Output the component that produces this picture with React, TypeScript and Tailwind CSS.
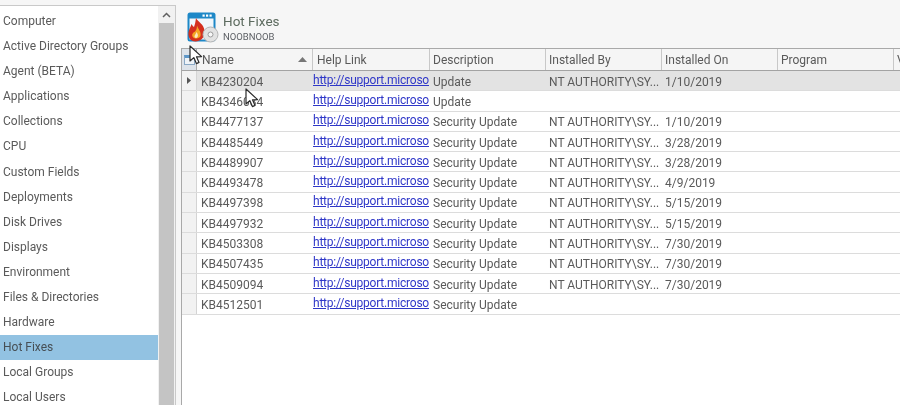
const sideItems = ["Computer","Active Directory Groups","Agent (BETA)","Applications","Collections","CPU","Custom Fields","Deployments","Disk Drives","Displays","Environment","Files & Directories","Hardware","Hot Fixes","Local Groups","Local Users"];
const by = "NT AUTHORITY\\SY...";
const rows = [
  ["KB4230204","Update",by,"1/10/2019"],
  ["KB4346084","Update","",""],
  ["KB4477137","Security Update",by,"1/10/2019"],
  ["KB4485449","Security Update",by,"3/28/2019"],
  ["KB4489907","Security Update",by,"3/28/2019"],
  ["KB4493478","Security Update",by,"4/9/2019"],
  ["KB4497398","Security Update",by,"5/15/2019"],
  ["KB4497932","Security Update",by,"5/15/2019"],
  ["KB4503308","Security Update",by,"7/30/2019"],
  ["KB4507435","Security Update",by,"7/30/2019"],
  ["KB4509094","Security Update",by,"7/30/2019"],
  ["KB4512501","Security Update","",""],
];
const heads = [["Help Link","w-[117px] pl-[4px]"],["Description","w-[116px] pl-[3px]"],["Installed By","w-[116px] pl-[3px]"],["Installed On","w-[116px] pl-[3px]"],["Program","w-[116px] pl-[3px]"]];

function Cursor({ className }: { className: string }) {
  return (
    <svg className={className} width="15" height="21" viewBox="0 0 15 21">
      <path d="M1 1 L1 16 L4.8 12.6 L7.4 18.6 L10 17.4 L7.5 11.8 L12.6 11.6 Z" fill="#fff" stroke="#2a2a2a" strokeWidth="1.2" strokeLinejoin="round" />
    </svg>
  );
}

function HotFixIcon() {
  return (
    <svg width="32" height="31" viewBox="0 0 32 31" className="shrink-0">
      <rect x="0.5" y="0.5" width="28" height="29" rx="2.5" fill="#1e88c7" />
      <rect x="2.5" y="6.5" width="24" height="21" fill="#f1f7fb" />
      <rect x="15.5" y="2.5" width="2.2" height="2.2" fill="#fff" />
      <rect x="19" y="2.5" width="2.2" height="2.2" fill="#fff" />
      <rect x="22.5" y="2.5" width="2.2" height="2.2" fill="#fff" />
      <path d="M9 6 C11 10 17 12 17.5 19 C18 26 13 29.5 8.5 29.5 C3.5 29.5 1 25.5 1.5 20.5 C2 17 3.5 15.5 4.5 12 C5.5 13.5 6 14.5 7 15 C8 12.5 8.5 9.5 9 6 Z" fill="#d42f1e" />
      <path d="M10 13.5 C11 17 14.5 19.5 13.5 24 C12.5 27 7 27.5 5.5 24.5 C4.5 22 6.5 20.5 8 19.5 C9.5 18 10 16 10 13.5 Z" fill="#f5a623" />
      <path d="M9.5 20 C10.5 22 11.5 23 10.5 25 C9.5 26.5 7.5 26 7.5 24.5 C7.5 23 9 22 9.5 20 Z" fill="#fde9c0" />
      <circle cx="23.5" cy="22.5" r="7.5" fill="#e2e2e2" stroke="#b5b5b5" />
      <circle cx="23.5" cy="22.5" r="2.5" fill="#f7f7f7" stroke="#9c9c9c" />
    </svg>
  );
}

export default function App() {
  return (
    <div className="relative flex h-[405px] w-[900px] overflow-hidden bg-[#f6f6f6] text-[12px] text-[#5a5a5a] blur-[0.35px]" style={{ fontFamily: 'Roboto, "Open Sans", sans-serif' }}>
      <div className="mt-[5px] flex w-[176px] shrink-0 border-t border-r border-[#c9c9c9] bg-white">
        <div className="w-[158px] shrink-0 pt-[2.4px]">
          {sideItems.map((s) => (
            <div key={s} className={`flex h-[25.1px] items-center pl-[3px] ${s === "Hot Fixes" ? "bg-[#92c2e2] text-[#474f55]" : ""}`}>{s}</div>
          ))}
        </div>
        <div className="flex w-[17px] flex-col bg-[#f1f1f1]">
          <div className="flex h-[17px] items-center justify-center">
            <svg width="9" height="6" viewBox="0 0 9 6"><path d="M1 5 L4.5 1.5 L8 5" fill="none" stroke="#606060" strokeWidth="1.5" /></svg>
          </div>
          <div className="mx-[1px] flex-1 bg-[#c4c4c4]" />
        </div>
      </div>
      <div className="ml-[5px] flex min-w-0 flex-1 flex-col">
        <div className="flex h-[48px] shrink-0 items-start pl-[6px] pt-[12px]">
          <HotFixIcon />
          <div className="ml-[4px] flex flex-col">
            <div className="text-[13.5px] leading-[18px] text-[#5d6b5f]">Hot Fixes</div>
            <div className="mt-[1px] text-[9.5px] leading-[11px] text-[#5c5f64]">NOOBNOOB</div>
          </div>
        </div>
        <div className="flex-1 overflow-hidden border-t border-l border-[#a9a9a9] bg-white">
          <div className="flex h-[22px] border-b border-[#a3a3a3] bg-[#f5f5f5]">
            <div className="flex w-[15px] shrink-0 items-center justify-center border-r border-[#a9a9a9] bg-[#dde3ea]">
              <div className="h-[10px] w-[11px] border border-[#8aa9c6] border-t-[3px] border-t-[#5c97c9] bg-[#eef3f8]" />
            </div>
            <div className="flex w-[116px] shrink-0 items-center justify-between border-r border-[#c8c8c8] pl-[5px] pr-[5px]">
              <span>Name</span>
              <svg width="9" height="5" viewBox="0 0 9 5"><path d="M0 5 L4.5 0 L9 5 Z" fill="#777" /></svg>
            </div>
            {heads.map(([h, w]) => (
              <div key={h} className={`flex ${w} shrink-0 items-center border-r border-[#c8c8c8]`}>{h}</div>
            ))}
            <div className="flex shrink-0 items-center pl-[3px]">V</div>
          </div>
          {rows.map((r, i) => (
            <div key={r[0]} className={`flex h-[20.3px] border-b border-[#dcdcdc] ${i === 0 ? "bg-[#e3e3e3]" : "bg-white"}`}>
              <div className="flex w-[15px] shrink-0 items-center justify-center border-r border-[#d4d4d4] bg-[#f2f2f2]">
                {i === 0 && <svg width="4" height="7" viewBox="0 0 4 7"><path d="M0 0 L4 3.5 L0 7 Z" fill="#555" /></svg>}
              </div>
              <div className="flex w-[115px] shrink-0 items-center pl-[4px] pt-[2px]">{r[0]}</div>
              <div className="flex w-[117px] shrink-0 items-center overflow-hidden pb-[2px] pl-[1px] tracking-[-0.22px] whitespace-nowrap text-[#2f37c8] underline">http://support.microso</div>
              <div className="flex w-[116px] shrink-0 items-center pl-[4px] pt-[2px]">{r[1]}</div>
              <div className="flex w-[116px] shrink-0 items-center pl-[4px] pt-[2px]">{r[2]}</div>
              <div className="flex w-[116px] shrink-0 items-center pl-[4px] pt-[2px]">{r[3]}</div>
            </div>
          ))}
        </div>
      </div>
      <Cursor className="absolute left-[189px] top-[45px]" />
      <Cursor className="absolute left-[245px] top-[88px]" />
    </div>
  );
}
